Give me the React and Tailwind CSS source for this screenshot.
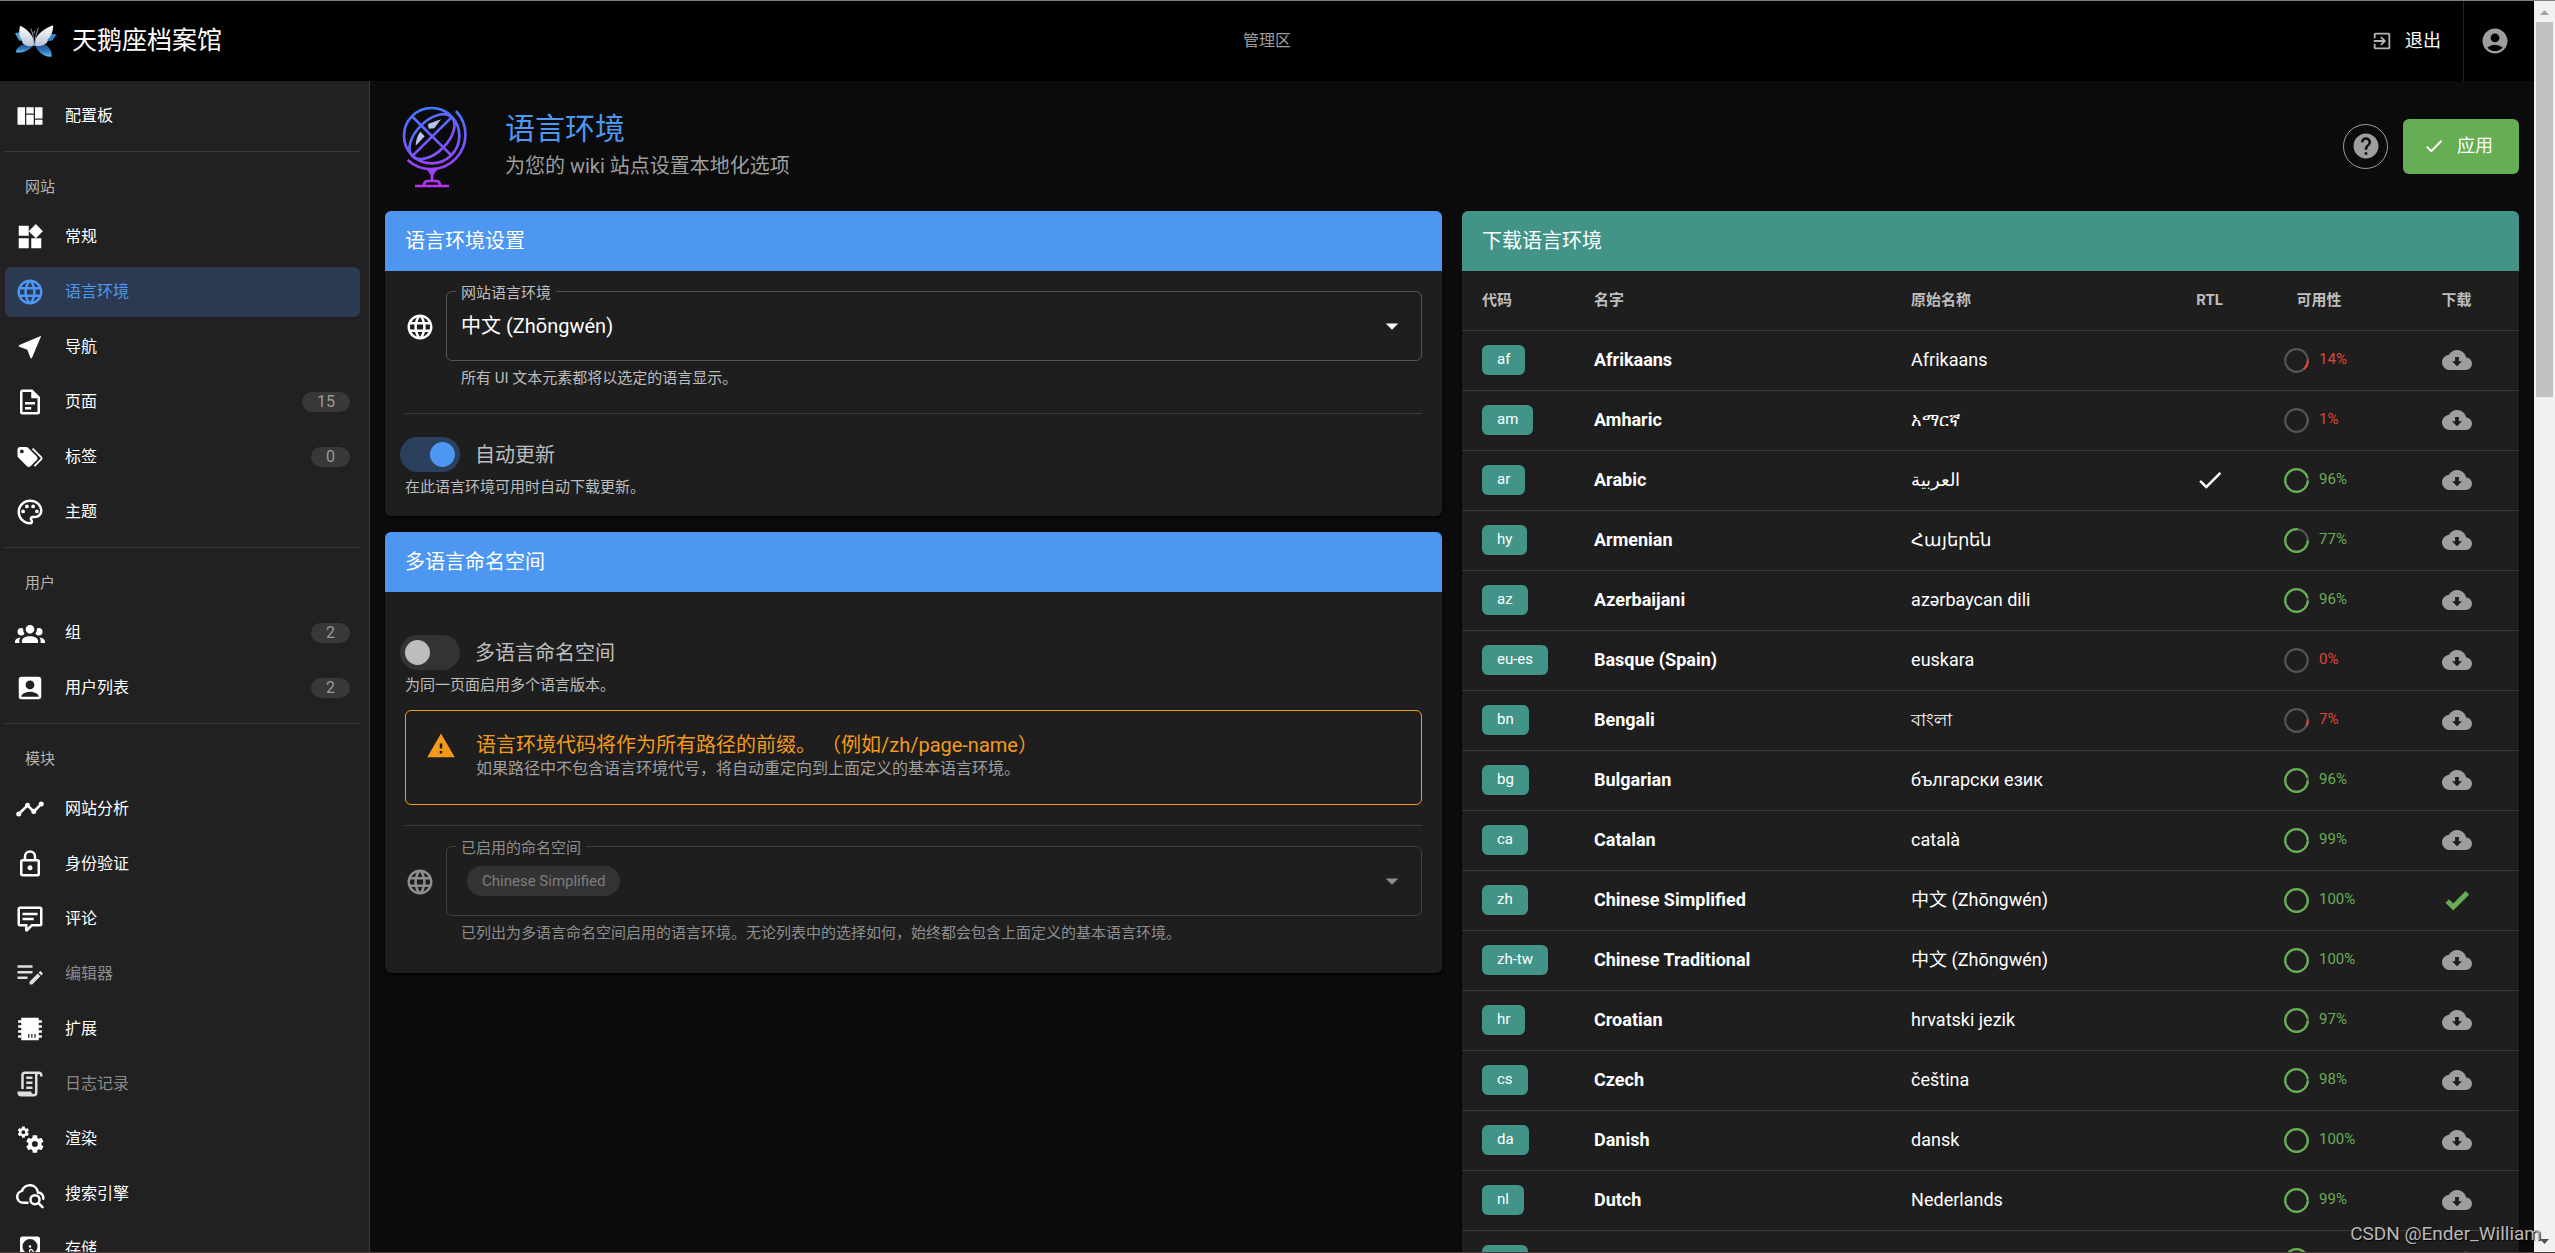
import React, { useState } from 'react';
import {
  MdAccountBox,
  MdAccountCircle,
  MdArrowDropDown,
  MdCheck,
  MdExitToApp,
  MdHelp,
  MdLanguage,
  MdNearMe,
  MdOutlinePalette,
  MdWarning,
  MdWidgets,
} from 'react-icons/md';

// Material Design Icons that react-icons does not ship
const paths = {
  dashboard: 'M2,5V19H8V5H2M9,5V10H15V5H9M16,5V14H22V5H16M9,11V19H15V11H9M16,15V19H22V15H16Z',
  page: 'M6,2A2,2 0 0,0 4,4V20A2,2 0 0,0 6,22H18A2,2 0 0,0 20,20V8L14,2H6M6,4H13V9H18V20H6V4M8,12V14H16V12H8M8,16V18H13V16H8Z',
  tags: 'M5.5,9A1.5,1.5 0 0,0 7,7.5A1.5,1.5 0 0,0 5.5,6A1.5,1.5 0 0,0 4,7.5A1.5,1.5 0 0,0 5.5,9M17.41,11.58C17.77,11.94 18,12.44 18,13C18,13.55 17.78,14.05 17.41,14.41L12.41,19.41C12.05,19.77 11.55,20 11,20C10.45,20 9.95,19.78 9.58,19.41L2.59,12.42C2.22,12.05 2,11.55 2,11V6C2,4.89 2.89,4 4,4H9C9.55,4 10.05,4.22 10.41,4.58L17.41,11.58M13.54,5.71L14.54,4.71L21.41,11.58C21.78,11.94 22,12.45 22,13C22,13.55 21.78,14.05 21.42,14.41L16.04,19.79L15.04,18.79L20.75,13L13.54,5.71Z',
  group: 'M12,5.5A3.5,3.5 0 0,1 15.5,9A3.5,3.5 0 0,1 12,12.5A3.5,3.5 0 0,1 8.5,9A3.5,3.5 0 0,1 12,5.5M5,8C5.56,8 6.08,8.15 6.53,8.42C6.38,9.85 6.8,11.27 7.66,12.38C7.16,13.34 6.16,14 5,14A3,3 0 0,1 2,11A3,3 0 0,1 5,8M19,8A3,3 0 0,1 22,11A3,3 0 0,1 19,14C17.84,14 16.84,13.34 16.34,12.38C17.2,11.27 17.62,9.85 17.47,8.42C17.92,8.15 18.44,8 19,8M5.5,18.25C5.5,16.18 8.41,14.5 12,14.5C15.59,14.5 18.5,16.18 18.5,18.25V20H5.5V18.25M0,20V18.5C0,17.11 1.89,15.94 4.45,15.6C3.86,16.28 3.5,17.22 3.5,18.25V20H0M24,20H20.5V18.25C20.5,17.22 20.14,16.28 19.55,15.6C22.11,15.94 24,17.11 24,18.5V20Z',
  timeline: 'M3,14L3.5,14.07L8.07,9.5C7.89,8.85 8.06,8.11 8.59,7.59C9.37,6.8 10.63,6.8 11.41,7.59C11.94,8.11 12.11,8.85 11.93,9.5L14.5,12.07L15,12C15.18,12 15.35,12 15.5,12.07L19.07,8.5C19,8.35 19,8.18 19,8A2,2 0 0,1 21,6A2,2 0 0,1 23,8A2,2 0 0,1 21,10C20.82,10 20.65,10 20.5,9.93L16.93,13.5C17,13.65 17,13.82 17,14A2,2 0 0,1 15,16A2,2 0 0,1 13,14L13.07,13.5L10.5,10.93C10.18,11 9.82,11 9.5,10.93L4.93,15.5L5,16A2,2 0 0,1 3,18A2,2 0 0,1 1,16A2,2 0 0,1 3,14Z',
  lock: 'M12,17C10.89,17 10,16.1 10,15C10,13.89 10.89,13 12,13A2,2 0 0,1 14,15A2,2 0 0,1 12,17M18,20V10H6V20H18M18,8A2,2 0 0,1 20,10V20A2,2 0 0,1 18,22H6C4.89,22 4,21.1 4,20V10C4,8.89 4.89,8 6,8H7V6A5,5 0 0,1 12,1A5,5 0 0,1 17,6V8H18M12,3A3,3 0 0,0 9,6V8H15V6A3,3 0 0,0 12,3Z',
  comment: 'M9,22A1,1 0 0,1 8,21V18H4A2,2 0 0,1 2,16V4C2,2.89 2.9,2 4,2H20A2,2 0 0,1 22,4V16A2,2 0 0,1 20,18H13.9L10.2,21.71C10,21.9 9.75,22 9.5,22V22H9M10,16V19.08L13.08,16H20V4H4V16H10M6,7H18V9H6V7M6,11H15V13H6V11Z',
  editor: 'M2,5V7H14V5H2M2,9.5V11.5H14V9.5H2M20.4,9.6C20.2,9.6 20,9.7 19.9,9.8L18.8,10.9L21,13.1L22.1,12C22.3,11.8 22.3,11.4 22.1,11.2L20.7,9.8C20.6,9.7 20.5,9.6 20.4,9.6M18.1,11.6L11.6,18.1V20.3H13.8L20.3,13.8L18.1,11.6M2,14V16H10V14H2Z',
  chip: 'M5,3H19V5H21.5V7H19V9H21.5V11H19V13H21.5V15H19V17H21.5V19H19V21H5V19H2.5V17H5V15H2.5V13H5V11H2.5V9H5V7H2.5V5H5V3M10.5,16V19H11.5V16H10.5M13,16V19H14V16H13M15.5,16V19H16.5V16H15.5Z',
  script: 'M15,20A1,1 0 0,0 16,19V4H8A1,1 0 0,0 7,5V16H5V5A3,3 0 0,1 8,2H19A3,3 0 0,1 22,5V6H20V5A1,1 0 0,0 19,4A1,1 0 0,0 18,5V9L18,19A3,3 0 0,1 15,22H5A3,3 0 0,1 2,19V18H13A2,2 0 0,0 15,20M9,6H14V8H9V6M9,10H14V12H9V10M9,14H14V16H9V14Z',
  cogs: 'M15.9,18.45C17.25,18.45 18.35,17.35 18.35,16C18.35,14.65 17.25,13.55 15.9,13.55C14.54,13.55 13.45,14.65 13.45,16C13.45,17.35 14.54,18.45 15.9,18.45M21.1,16.68L22.58,17.84C22.71,17.95 22.75,18.13 22.66,18.29L21.26,20.71C21.17,20.86 21,20.92 20.83,20.86L19.09,20.16C18.73,20.44 18.33,20.67 17.91,20.85L17.64,22.7C17.62,22.87 17.47,23 17.3,23H14.5C14.32,23 14.18,22.87 14.15,22.7L13.89,20.85C13.46,20.67 13.07,20.44 12.71,20.16L10.96,20.86C10.81,20.92 10.62,20.86 10.54,20.71L9.14,18.29C9.05,18.13 9.09,17.95 9.22,17.84L10.7,16.68L10.65,16L10.7,15.31L9.22,14.16C9.09,14.05 9.05,13.86 9.14,13.71L10.54,11.29C10.62,11.13 10.81,11.07 10.96,11.13L12.71,11.84C13.07,11.56 13.46,11.32 13.89,11.15L14.15,9.29C14.18,9.13 14.32,9 14.5,9H17.3C17.47,9 17.62,9.13 17.64,9.29L17.91,11.15C18.33,11.32 18.73,11.56 19.09,11.84L20.83,11.13C21,11.07 21.17,11.13 21.26,11.29L22.66,13.71C22.75,13.86 22.71,14.05 22.58,14.16L21.1,15.31L21.15,16L21.1,16.68M6.69,8.07C7.56,8.07 8.26,7.37 8.26,6.5C8.26,5.63 7.56,4.92 6.69,4.92A1.58,1.58 0 0,0 5.11,6.5C5.11,7.37 5.82,8.07 6.69,8.07M10.03,6.94L11,7.68C11.07,7.75 11.09,7.87 11.03,7.97L10.13,9.53C10.08,9.63 9.96,9.67 9.86,9.63L8.74,9.18L8,9.62L7.81,10.81C7.79,10.92 7.7,11 7.59,11H5.79C5.67,11 5.58,10.92 5.56,10.81L5.4,9.62L4.64,9.18L3.52,9.63C3.41,9.67 3.3,9.63 3.24,9.53L2.34,7.97C2.28,7.87 2.31,7.75 2.39,7.68L3.34,6.94L3.31,6.5L3.34,6.06L2.39,5.32C2.31,5.25 2.28,5.13 2.34,5.03L3.24,3.47C3.3,3.37 3.41,3.33 3.52,3.37L4.63,3.82L5.4,3.38L5.56,2.19C5.58,2.08 5.67,2 5.79,2H7.59C7.7,2 7.79,2.08 7.81,2.19L8,3.38L8.74,3.82L9.86,3.37C9.96,3.33 10.08,3.37 10.13,3.47L11.03,5.03C11.09,5.13 11.07,5.25 11,5.32L10.03,6.06L10.06,6.5L10.03,6.94Z',
  disk: 'M6,2H18A2,2 0 0,1 20,4V20A2,2 0 0,1 18,22H6A2,2 0 0,1 4,20V4A2,2 0 0,1 6,2M12,4A6,6 0 0,0 6,10C6,13.31 8.69,16 12.1,16L11.22,13.77C10.95,13.29 11.11,12.68 11.59,12.4L12.45,11.9C12.93,11.63 13.54,11.79 13.82,12.27L15.74,14.69C17.12,13.59 18,11.9 18,10A6,6 0 0,0 12,4M12,9A1,1 0 0,1 13,10A1,1 0 0,1 12,11A1,1 0 0,1 11,10A1,1 0 0,1 12,9M7,18A1,1 0 0,0 6,19A1,1 0 0,0 7,20A1,1 0 0,0 8,19A1,1 0 0,0 7,18M12.09,13.27L14.58,19.58L17.17,18.08L12.95,12.77L12.09,13.27Z',
  cloudDownload: 'M12,17L8,13H10.5V9.5H13.5V13H16L12,17M19.35,10.03C18.67,6.59 15.64,4 12,4C9.11,4 6.6,5.64 5.35,8.03C2.34,8.36 0,10.9 0,14A6,6 0 0,0 6,20H19A5,5 0 0,0 24,15C24,12.36 21.95,10.22 19.35,10.03Z',
  checkBold: 'M9,20.42L2.79,14.21L5.62,11.38L9,14.77L18.88,4.88L21.71,7.71L9,20.42Z',
};

function Icon({ name, size = 30, className = '' }) {
  return (
    <svg width={size} height={size} viewBox="0 0 24 24" fill="currentColor" fillRule="evenodd" className={className} aria-hidden="true">
      <path d={paths[name]} />
    </svg>
  );
}

function CloudSearch() {
  return (
    <svg width="30" height="30" viewBox="0 0 24 24" fill="none" stroke="currentColor" strokeWidth="2" strokeLinecap="round" aria-hidden="true">
      <path d="M10 19H6.5A4.8 4.8 0 0 1 5.6 9.5A6.6 6.6 0 0 1 18.4 10.8A4.3 4.3 0 0 1 22.6 15.8" />
      <circle cx="16" cy="16.5" r="3.6" />
      <path d="M18.8 19.3L22 22.5" />
    </svg>
  );
}

function Logo() {
  return (
    <svg width="42" height="36" viewBox="46 8 126 107" aria-hidden="true">
      <defs>
        <linearGradient id="wingBlue" x1="0" y1="0" x2="0" y2="1">
          <stop offset="0" stopColor="#1d4f86" />
          <stop offset="0.5" stopColor="#2a6db0" />
          <stop offset="1" stopColor="#5cb8ee" />
        </linearGradient>
        <linearGradient id="wingWhite" x1="0" y1="0" x2="0" y2="1">
          <stop offset="0" stopColor="#ffffff" />
          <stop offset="1" stopColor="#b9c3d6" />
        </linearGradient>
      </defs>
      <path d="M46 38L66 34L76 62L58 60Z" fill="#3fa3dc" />
      <path d="M171 42L146 38L134 62L158 60Z" fill="#2f86c8" />
      <path d="M100 68C80 66 50 76 48 95C62 100 88 92 104 72Z" fill="url(#wingBlue)" />
      <path d="M106 68C128 64 158 76 156 108C136 112 112 94 106 72Z" fill="url(#wingBlue)" />
      <path d="M103 74C84 84 62 68 68 58C56 54 58 22 62 16C76 22 98 40 103 62Z" fill="url(#wingWhite)" />
      <path d="M105 76C126 80 148 68 144 56C156 48 162 24 160 14C142 20 112 38 106 60Z" fill="url(#wingWhite)" />
      <path d="M104 76L100 44M105 76L109 44M100 44L94 24M109 44L116 22M102 40L106 30" stroke="#8b93a5" strokeWidth="3" fill="none" />
    </svg>
  );
}

function Globe() {
  return (
    <svg width="90" height="100" viewBox="0 0 270 300" fill="none" stroke="url(#globeStroke)" strokeWidth="8" aria-hidden="true">
      <defs>
        <linearGradient id="globeStroke" gradientUnits="userSpaceOnUse" x1="0" y1="30" x2="0" y2="275">
          <stop offset="0" stopColor="#3f7bff" />
          <stop offset="0.55" stopColor="#8050ff" />
          <stop offset="1" stopColor="#bb30f0" />
        </linearGradient>
        <linearGradient id="globeGlass" x1="0" y1="0" x2="1" y2="1">
          <stop offset="0" stopColor="#a8dcf0" />
          <stop offset="1" stopColor="#c9a8f5" />
        </linearGradient>
      </defs>
      <path d="M99 84L138 70L118 97L101 98Z" fill="url(#globeGlass)" stroke="none" />
      <path d="M76 107L89 121L62 149Q63 124 76 107Z" fill="url(#globeGlass)" stroke="none" />
      <circle cx="110" cy="119" r="83" />
      <ellipse cx="111" cy="122" rx="83" ry="47" transform="rotate(-45 111 122)" />
      <path d="M50 60L169 178M50 182L172 62" />
      <path d="M183 45A103.3 103.3 0 0 1 38 192" />
      <path d="M111 228V252M60 270H162" />
      <path d="M97 222H125L113 238H109Z" fill="url(#globeStroke)" strokeWidth="2" />
      <path d="M87 268Q87 255 99 255H123Q135 255 135 268" />
    </svg>
  );
}

const nav = [
  { items: [{ label: '配置板', icon: <Icon name="dashboard" /> }] },
  {
    title: '网站',
    items: [
      { label: '常规', icon: <MdWidgets size={30} /> },
      { label: '语言环境', icon: <MdLanguage size={30} />, active: true },
      { label: '导航', icon: <MdNearMe size={30} /> },
      { label: '页面', icon: <Icon name="page" />, count: 15 },
      { label: '标签', icon: <Icon name="tags" />, count: 0 },
      { label: '主题', icon: <MdOutlinePalette size={30} /> },
    ],
  },
  {
    title: '用户',
    items: [
      { label: '组', icon: <Icon name="group" />, count: 2 },
      { label: '用户列表', icon: <MdAccountBox size={30} />, count: 2 },
    ],
  },
  {
    title: '模块',
    items: [
      { label: '网站分析', icon: <Icon name="timeline" /> },
      { label: '身份验证', icon: <Icon name="lock" /> },
      { label: '评论', icon: <Icon name="comment" /> },
      { label: '编辑器', icon: <Icon name="editor" />, disabled: true },
      { label: '扩展', icon: <Icon name="chip" /> },
      { label: '日志记录', icon: <Icon name="script" />, disabled: true },
      { label: '渲染', icon: <Icon name="cogs" /> },
      { label: '搜索引擎', icon: <CloudSearch /> },
      { label: '存储', icon: <Icon name="disk" /> },
    ],
  },
];

const locales = [
  { code: 'af', name: 'Afrikaans', native: 'Afrikaans', pct: 14 },
  { code: 'am', name: 'Amharic', native: 'አማርኛ', pct: 1 },
  { code: 'ar', name: 'Arabic', native: 'العربية', pct: 96, rtl: true },
  { code: 'hy', name: 'Armenian', native: 'Հայերեն', pct: 77 },
  { code: 'az', name: 'Azerbaijani', native: 'azərbaycan dili', pct: 96 },
  { code: 'eu-es', name: 'Basque (Spain)', native: 'euskara', pct: 0 },
  { code: 'bn', name: 'Bengali', native: 'বাংলা', pct: 7 },
  { code: 'bg', name: 'Bulgarian', native: 'български език', pct: 96 },
  { code: 'ca', name: 'Catalan', native: 'català', pct: 99 },
  { code: 'zh', name: 'Chinese Simplified', native: '中文 (Zhōngwén)', pct: 100, installed: true },
  { code: 'zh-tw', name: 'Chinese Traditional', native: '中文 (Zhōngwén)', pct: 100 },
  { code: 'hr', name: 'Croatian', native: 'hrvatski jezik', pct: 97 },
  { code: 'cs', name: 'Czech', native: 'čeština', pct: 98 },
  { code: 'da', name: 'Danish', native: 'dansk', pct: 100 },
  { code: 'nl', name: 'Dutch', native: 'Nederlands', pct: 99 },
  { code: 'en', name: 'English', native: 'English', pct: 100, installed: true },
];

function NavItem({ item }) {
  let color = 'text-white';
  if (item.active) color = 'bg-[#2c3a51] text-[#4d97f2]';
  if (item.disabled) color = 'text-[#dedede]';
  return (
    <a href="#" aria-disabled={item.disabled} className={`flex h-[50px] items-center rounded-md px-2.5 ${color}`}>
      {item.icon}
      <span className={`ml-5 flex-1 text-base ${item.disabled ? 'text-[#8a8a8a]' : ''}`}>{item.label}</span>
      {item.count !== undefined && (
        <span className="flex h-5 items-center rounded-full bg-[#383838] px-[15px] text-base text-[#9a9a9a]">{item.count}</span>
      )}
    </a>
  );
}

function Sidebar() {
  return (
    <nav className="w-[370px] shrink-0 overflow-hidden border-r border-[#3a3a3a] bg-[#212121] pt-2.5 pr-[9px] pl-[5px]">
      {nav.map((section, i) => (
        <div key={i} className={i > 0 ? 'mt-2.5 border-t border-[#3c3c3c]' : ''}>
          {section.title && (
            <h2 className="flex h-[60px] items-center px-5 pt-2.5 text-[15px] text-[#b5b5b5]">{section.title}</h2>
          )}
          <div className="flex flex-col gap-[5px]">
            {section.items.map((item) => (
              <NavItem key={item.label} item={item} />
            ))}
          </div>
        </div>
      ))}
    </nav>
  );
}

function Header() {
  return (
    <header className="grid h-20 shrink-0 grid-cols-3 items-center bg-black">
      <div className="flex items-center gap-[15px] pl-[15px]">
        <Logo />
        <h1 className="text-[25px]">天鹅座档案馆</h1>
      </div>
      <div className="text-center text-base text-[#9a9a9a]">管理区</div>
      <div className="flex h-full justify-end">
        <button type="button" className="flex items-center gap-3 px-[22px] text-lg">
          <MdExitToApp size={22} className="text-[#b5b5b5]" />
          退出
        </button>
        <button type="button" aria-label="帐户" className="flex w-[71px] items-center border-l border-[#242424] pl-4 text-[#9e9e9e]">
          <MdAccountCircle size={30} />
        </button>
      </div>
    </header>
  );
}

function Card({ title, children }) {
  return (
    <section className="overflow-hidden rounded-md bg-[#1e1e1e] shadow-sm shadow-black">
      <h3 className="flex h-[60px] items-center bg-[#4d97f2] px-5 text-xl">{title}</h3>
      {children}
    </section>
  );
}

function Switch({ id, label, hint, checked, onChange }) {
  return (
    <div>
      <div className="-ml-[5px] flex items-center gap-[15px]">
        <input
          id={id}
          type="checkbox"
          checked={checked}
          onChange={onChange}
          className="flex h-[35px] w-[60px] appearance-none items-center rounded-full bg-[#333333] px-[5px] before:size-[25px] before:rounded-full before:bg-[#bdbdbd] checked:justify-end checked:bg-[#2b405c] checked:before:bg-[#4d97f2]"
        />
        <label htmlFor={id} className="text-xl leading-7 text-[#bdbdbd]">{label}</label>
      </div>
      <p className="mt-1.5 text-[15px] leading-[18px] text-[#bdbdbd]">{hint}</p>
    </div>
  );
}

function LocaleSettings() {
  const [locale, setLocale] = useState('zh');
  const [autoUpdate, setAutoUpdate] = useState(true);

  return (
    <Card title="语言环境设置">
      <div className="p-5">
        <div className="flex gap-[11px]">
          <MdLanguage size={30} className="mt-[21px] shrink-0" />
          <div className="flex-1">
            <div className="relative">
              <select
                id="locale"
                value={locale}
                onChange={(e) => setLocale(e.target.value)}
                className="h-[70px] w-full appearance-none rounded-md border border-[#555555] bg-transparent px-3.5 text-xl"
              >
                <option value="zh">中文 (Zhōngwén)</option>
                <option value="en">English</option>
              </select>
              <label htmlFor="locale" className="absolute -top-2 left-2.5 bg-[#1e1e1e] px-[5px] text-[15px] leading-5 text-[#bdbdbd]">
                网站语言环境
              </label>
              <MdArrowDropDown size={30} className="pointer-events-none absolute top-5 right-[15px]" />
            </div>
            <p className="mt-2 pl-[15px] text-[15px] leading-[18px] text-[#bdbdbd]">所有 UI 文本元素都将以选定的语言显示。</p>
          </div>
        </div>
        <hr className="mt-[26px] mb-[23px] border-[#3a3a3a]" />
        <Switch
          id="auto-update"
          label="自动更新"
          hint="在此语言环境可用时自动下载更新。"
          checked={autoUpdate}
          onChange={(e) => setAutoUpdate(e.target.checked)}
        />
      </div>
    </Card>
  );
}

function Namespacing() {
  const [namespacing, setNamespacing] = useState(false);

  return (
    <Card title="多语言命名空间">
      <div className="px-5 pt-[43px] pb-[31px]">
        <Switch
          id="namespacing"
          label="多语言命名空间"
          hint="为同一页面启用多个语言版本。"
          checked={namespacing}
          onChange={(e) => setNamespacing(e.target.checked)}
        />
        <div className="mt-4 flex h-[95px] gap-5 rounded-md border border-[#f39a1b] px-5 pt-5">
          <MdWarning size={30} className="shrink-0 text-[#f39a1b]" />
          <div>
            <p className="text-xl leading-7 text-[#f39a1b]">语言环境代码将作为所有路径的前缀。 （例如/zh/page-name）</p>
            <p className="text-base leading-5 text-[#9e9e9e]">
              如果路径中不包含语言环境代号，将自动重定向到上面定义的基本语言环境。
            </p>
          </div>
        </div>
        <hr className="my-5 border-[#3a3a3a]" />
        <div className="flex gap-[11px] text-[#8e8e8e]">
          <MdLanguage size={30} className="mt-[21px] shrink-0" />
          <div className="flex-1">
            <div className="relative">
              <button
                id="namespaces"
                type="button"
                disabled
                aria-haspopup="listbox"
                className="flex h-[70px] w-full items-center rounded-md border border-[#404040] px-5"
              >
                <span className="flex h-[30px] items-center rounded-full bg-[#333333] px-[15px] text-[15px] text-[#7d7d7d]">Chinese Simplified</span>
              </button>
              <label htmlFor="namespaces" className="absolute -top-2 left-2.5 bg-[#1e1e1e] px-[5px] text-[15px] leading-5">
                已启用的命名空间
              </label>
              <MdArrowDropDown size={30} className="pointer-events-none absolute top-5 right-[15px]" />
            </div>
            <p className="mt-2 pl-[15px] text-[15px] leading-[18px]">
              已列出为多语言命名空间启用的语言环境。无论列表中的选择如何，始终都会包含上面定义的基本语言环境。
            </p>
          </div>
        </div>
      </div>
    </Card>
  );
}

function Availability({ pct }) {
  const color = pct <= 33 ? 'text-[#e04436]' : 'text-[#66ae54]';
  return (
    <div className={`flex items-center gap-2.5 ${color}`}>
      <svg width="25" height="25" viewBox="0 0 25 25" fill="none" strokeWidth="2.2" aria-hidden="true">
        <circle cx="12.5" cy="12.5" r="11.3" stroke="#555555" />
        {pct > 0 && <circle cx="12.5" cy="12.5" r="11.3" stroke="currentColor" pathLength="100" strokeDasharray={`${pct} 100`} />}
      </svg>
      <span className="text-[15px]">{pct}%</span>
    </div>
  );
}

function DownloadTable() {
  return (
    <section className="overflow-hidden rounded-md bg-[#1e1e1e] shadow-sm shadow-black">
      <h3 className="flex h-[60px] items-center bg-[#429488] px-5 text-xl">下载语言环境</h3>
      <table className="w-full table-fixed text-left text-lg">
        <colgroup>
          <col className="w-[112px]" />
          <col className="w-[30%]" />
          <col />
          <col className="w-[69px]" />
          <col className="w-[150px]" />
          <col className="w-[125px]" />
        </colgroup>
        <thead>
          <tr className="h-[59px] border-b border-[#3a3a3a] text-[15px] text-[#bdbdbd]">
            <th className="px-5">代码</th>
            <th className="px-5">名字</th>
            <th className="px-5">原始名称</th>
            <th className="text-center">RTL</th>
            <th className="text-center">可用性</th>
            <th className="text-center">下载</th>
          </tr>
        </thead>
        <tbody>
          {locales.map((lc) => (
            <tr key={lc.code} className="h-[60px] border-b border-[#3a3a3a]">
              <td className="px-5">
                <span className="inline-flex h-[30px] items-center rounded-md bg-[#429488] px-[15px] align-middle text-[15px]">{lc.code}</span>
              </td>
              <td className="px-5 font-bold">{lc.name}</td>
              <td className="px-5">{lc.native}</td>
              <td>{lc.rtl && <MdCheck size={30} className="mx-auto" />}</td>
              <td className="pl-10"><Availability pct={lc.pct} /></td>
              <td>
                {lc.installed ? (
                  <Icon name="checkBold" className="mx-auto text-[#66ae54]" />
                ) : (
                  <button type="button" aria-label={`下载 ${lc.name}`} className="mx-auto block text-[#9e9e9e]">
                    <Icon name="cloudDownload" />
                  </button>
                )}
              </td>
            </tr>
          ))}
        </tbody>
      </table>
    </section>
  );
}

function Scrollbar() {
  return (
    <div className="flex w-[21px] shrink-0 flex-col items-center bg-[#f1f1f1]" aria-hidden="true">
      <svg width="9" height="21" viewBox="0 0 9 21"><path d="M0 14L4.5 9L9 14Z" fill="#a3a3a3" /></svg>
      <div className="h-[30%] w-[17px] bg-[#c1c1c1]" />
      <svg width="9" height="21" viewBox="0 0 9 21" className="mt-auto"><path d="M0 8L4.5 13L9 8Z" fill="#505050" /></svg>
    </div>
  );
}

function App() {
  return (
    <div className="relative flex h-screen overflow-hidden border-t border-b border-t-[#7f7f84] border-b-[#4d3b3a] bg-[#0b0b0b] font-[Roboto,'Noto_Sans_CJK_SC','Noto_Sans',sans-serif] text-white">
      <div className="flex min-w-0 flex-1 flex-col">
        <Header />
        <div className="flex min-h-0 flex-1">
          <Sidebar />
          <main className="min-w-0 flex-1 overflow-hidden px-[15px]">
            <div className="flex h-[130px] items-center">
              <div className="mr-5 ml-2.5"><Globe /></div>
              <div className="flex-1">
                <h2 className="text-3xl leading-9 text-[#4d97f2]">语言环境</h2>
                <p className="mt-1 text-xl leading-[30px] text-[#9e9e9e]">为您的 wiki 站点设置本地化选项</p>
              </div>
              <button type="button" aria-label="帮助" className="flex size-[45px] items-center justify-center rounded-full border border-[#9e9e9e] text-[#9e9e9e]">
                <MdHelp size={30} />
              </button>
              <button type="button" className="ml-[15px] flex h-[55px] items-center gap-3 rounded-md bg-[#66ae54] pr-[26px] pl-5 text-lg">
                <MdCheck size={22} />
                应用
              </button>
            </div>
            <div className="grid grid-cols-2 items-start gap-5">
              <div className="flex flex-col gap-4">
                <LocaleSettings />
                <Namespacing />
              </div>
              <DownloadTable />
            </div>
          </main>
        </div>
      </div>
      <Scrollbar />
      <p className="absolute right-3.5 bottom-1 text-[19px] text-[#b8b8b8] [text-shadow:1px_1px_1px_#000]">CSDN @Ender_William</p>
    </div>
  );
}

export default App;
